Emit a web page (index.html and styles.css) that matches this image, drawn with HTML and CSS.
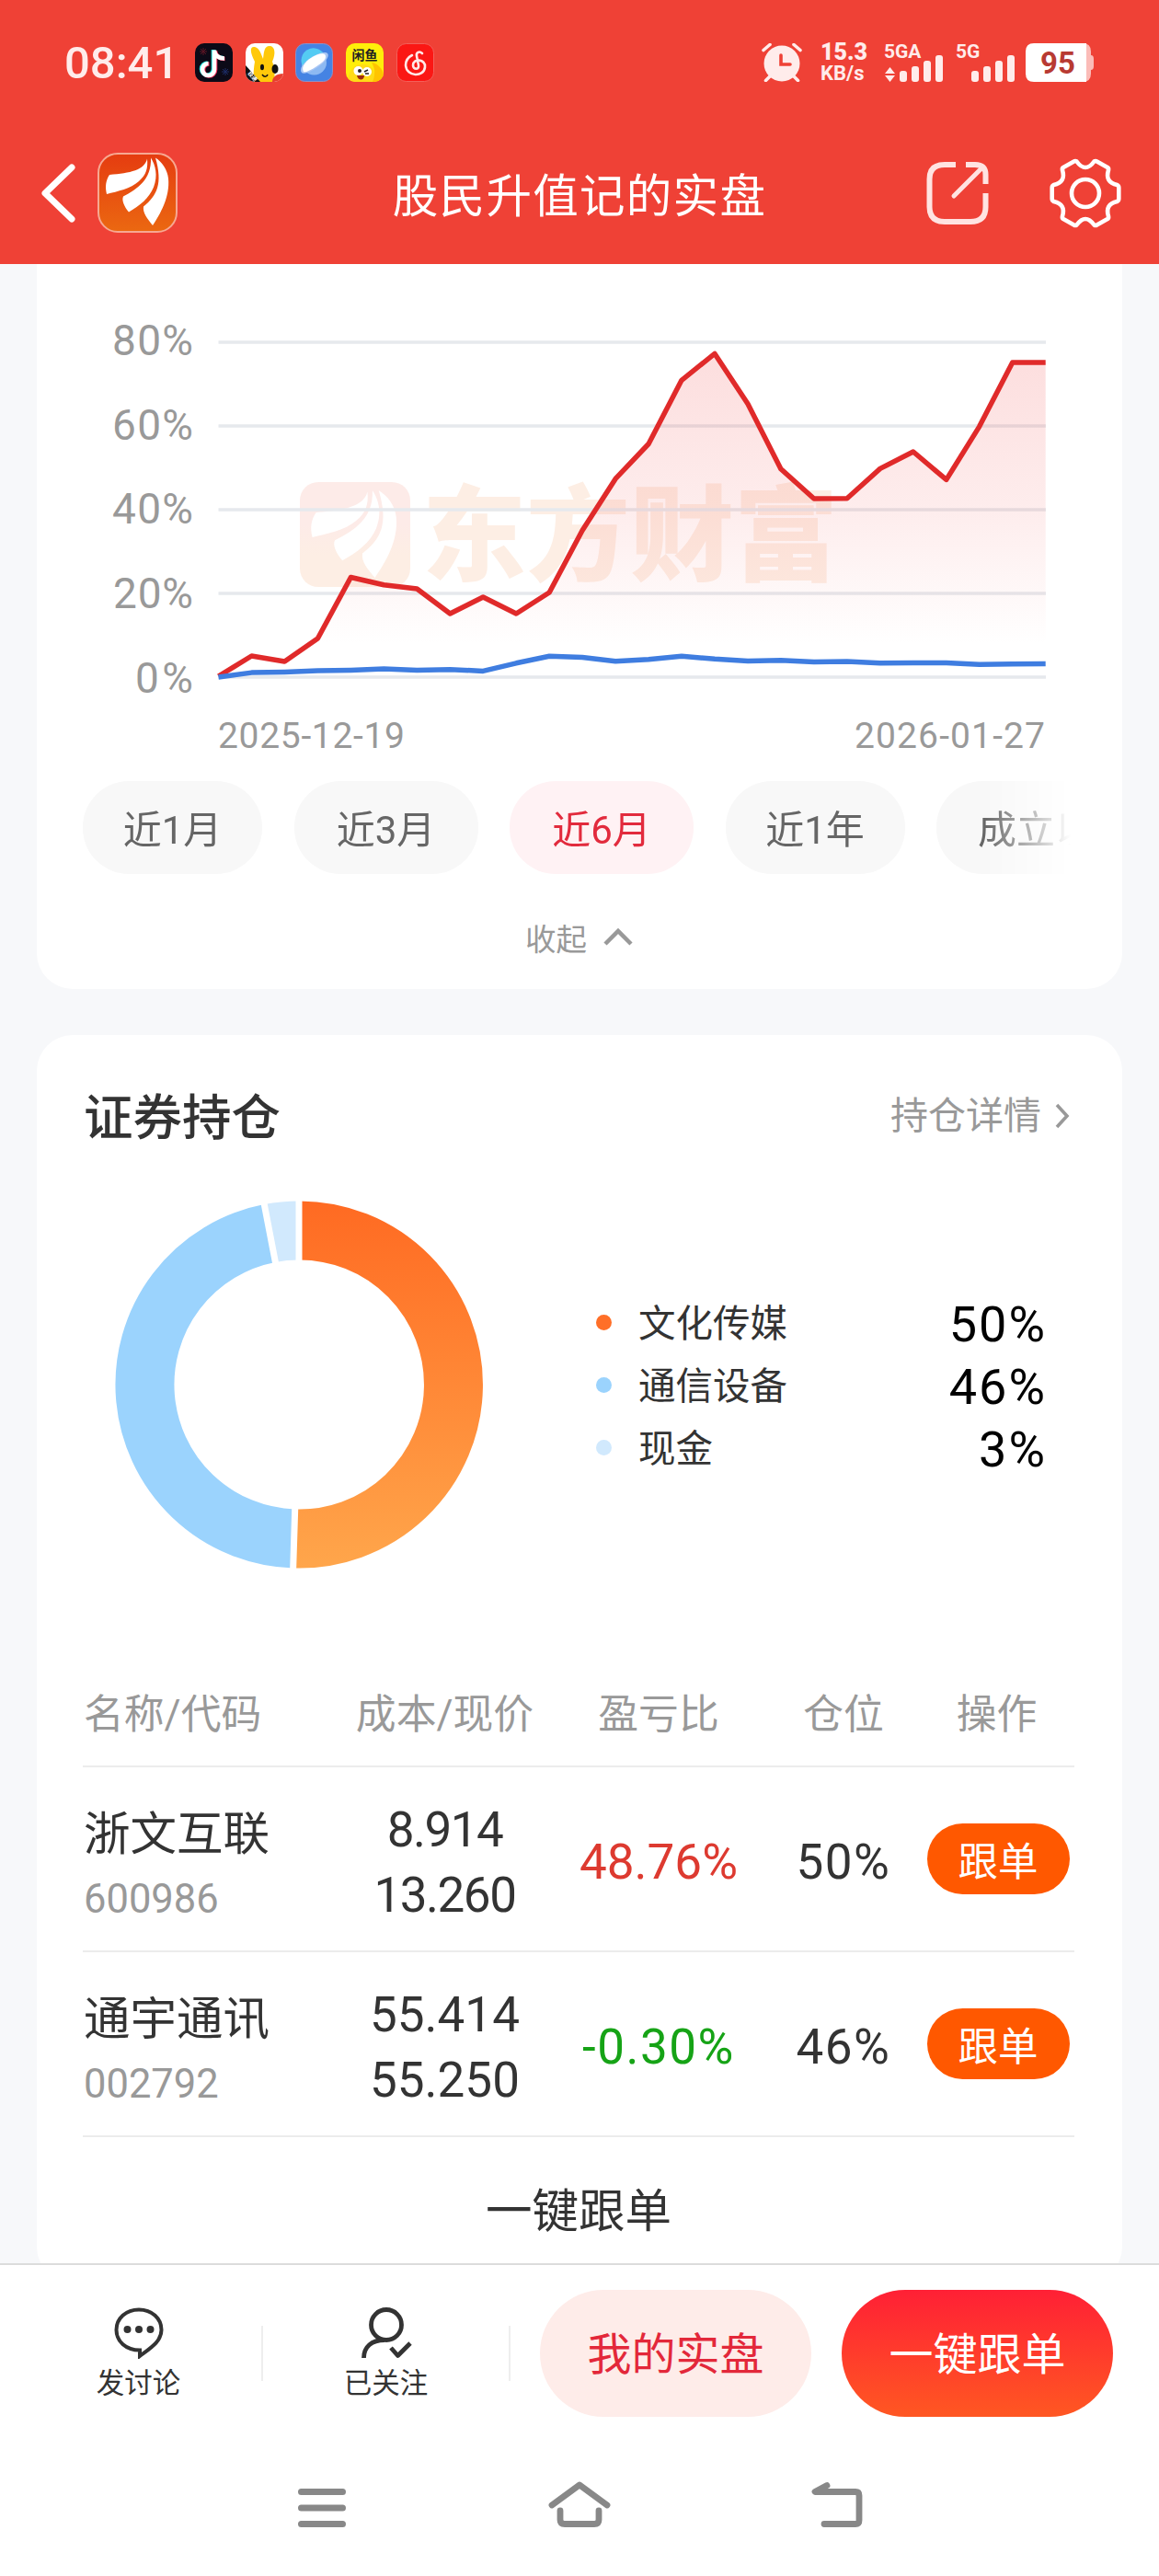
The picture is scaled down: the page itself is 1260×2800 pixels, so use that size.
FILE: index.html
```html
<!DOCTYPE html>
<html lang="zh-CN">
<head>
    <meta charset="UTF-8">
    <meta name="viewport" content="width=device-width, initial-scale=1.0">
    <title>股民升值记的实盘</title>
    <link rel="stylesheet" href="styles.css">
</head>

<body>
    <header class="header">
        <div class="status">
            <span class="time">08:41</span>
            <div class="apps">
                <svg width="41" height="42" viewBox="0 0 41 42">
                    <rect width="41" height="42" rx="10" fill="#0c0a17"/>
                    <path d="M6 6l6 6M12 6l-6 6M9 5v8M5 9h8" stroke="#5a1524"/>
                    <path d="M30 28l6 6M36 28l-6 6M33 27v8M29 31h8" stroke="#1c2c66"/>
                    <g fill="none" stroke-width="4.6">
                        <path d="M20 7v21a6.5 6.5 0 1 1-6.500-6.500M20 8c1 5 5 8 10.500 8" stroke="#27e4e0"/>
                        <path d="M22 8v21a6.500 6.500 0 1 1-6.500-6.500M22 9c1 5 5 8 10.500 8" stroke="#f3305a"/>
                        <path d="M21 7.500v21a6.500 6.500 0 1 1-6.500-6.500M21 8.500c1 5 5 8 11 8" stroke="#fff"/>
                    </g>
                </svg>
                <svg width="41" height="42" viewBox="0 0 41 42">
                    <clipPath id="app2"><rect width="41" height="42" rx="10"/></clipPath>
                    <g clip-path="url(#app2)">
                        <rect width="41" height="42" fill="#fff"/>
                        <path d="M9 42C8 34 9 26 10 20 4 8 5 3 10 4s7 8 9 13c1-7 1-14 7-14s7 8 3 17c3 7 3 15 2 22z" fill="#ffc90a"/>
                        <path d="M0 24l16 18H0z" fill="#111"/>
                        <path d="M29 42c0-5 4-9 12-9v9z" fill="#e8402f"/>
                        <ellipse cx="18" cy="26" rx="2" ry="3.200" fill="#111"/>
                        <ellipse cx="32" cy="28" rx="3.500" ry="5" fill="#111"/>
                        <path d="M18 34c2 3 5 3 6 0" fill="none" stroke="#111" stroke-width="1.500"/>
                    </g>
                    <text class="app-tiny" transform="translate(2 33) rotate(48)" fill="#fff">极速</text>
                </svg>
                <svg width="41" height="42" viewBox="0 0 41 42">
                    <rect x=".5" y=".5" width="40" height="41" rx="10" fill="#4583e3" stroke="#8f8fc4"/>
                    <circle cx="20.500" cy="21" r="13.500" fill="#8db9f2"/>
                    <path d="M8 25a13.500 13.500 0 0 1 23-14z" fill="#54cbf3"/>
                    <path d="M7 32c-3-4 1-10 8-15S32 8 35 11s-3 10-9 14-16 10-19 7z" fill="#a9c6f4"/>
                    <path d="M9 31c-3-5 2-11 8-15s13-6 15-4 1 6-3 9-17 12-20 10z" fill="#fff"/>
                </svg>
                <svg width="41" height="42" viewBox="0 0 41 42">
                    <clipPath id="app4"><rect width="41" height="42" rx="10"/></clipPath>
                    <g clip-path="url(#app4)">
                        <rect width="41" height="42" fill="#ffee0a"/>
                        <path d="M23 42c11-4 9-14 5-21 7 1 12 7 13 13v8z" fill="#ffc400"/>
                        <path d="M3 42c-2-8 4-20 16-19s14 10 10 19z" fill="#ffdb17"/>
                        <circle cx="13.500" cy="30" r="5" fill="#fff"/>
                        <circle cx="23" cy="31" r="5" fill="#fff"/>
                        <circle cx="15" cy="30" r="2" fill="#222"/>
                        <path d="M20 31l4-2M21 33h4" stroke="#222" stroke-width="1.500"/>
                        <path d="M12 35h8c0 6-7 6-8 0z" fill="#9c2a10"/>
                    </g>
                    <text class="app-name" x="20.500" y="18" text-anchor="middle" fill="#222">闲鱼</text>
                </svg>
                <svg width="41" height="42" viewBox="0 0 41 42">
                    <rect x=".5" y=".5" width="40" height="41" rx="10" fill="#fb1714" stroke="#f3605a"/>
                    <g fill="none" stroke="#ffe9e8" stroke-width="2.600" stroke-linecap="round">
                        <path d="M28 11c-3-3-7-1-6 3l2 10c1 5-6 5-6 0 0-8 14-7 13 2-1 11-20 11-21-2 0-6 3-9 7-11"/>
                    </g>
                </svg>
            </div>
            <div class="status-right">
                <svg class="alarm" width="44" height="42" viewBox="0 0 44 42">
                    <g fill="none" stroke="#ffeceb" stroke-width="3.600" stroke-linecap="round">
                        <path d="M2 7.500l7-6M42 7.500l-7-6M9 36l-4.500 4.500M35 36l4.500 4.500"/>
                    </g>
                    <circle cx="22" cy="22" r="19.500" fill="#ffeceb"/>
                    <path d="M21 13v10h10" fill="none" stroke="#ef4136" stroke-width="3.600" stroke-linecap="round"/>
                </svg>
                <div class="speed"><b>15.3</b><span>KB/s</span></div>
                <svg class="signal" width="65" height="54" viewBox="0 -5 65 54" fill="#ffeceb">
                    <text class="net" x="0" y="17">5GA</text>
                    <path d="M6.500 27l5.500 7H1zM6.500 43l5.500-7H1z"/>
                    <rect x="17" y="31" width="8" height="12" rx="3"/>
                    <rect x="30" y="26" width="8" height="17" rx="3"/>
                    <rect x="43" y="20" width="8" height="23" rx="3"/>
                    <rect x="56" y="14" width="8" height="29" rx="3"/>
                </svg>
                <svg class="signal2" width="65" height="54" viewBox="0 -5 65 54" fill="#ffeceb">
                    <text class="net" x="0" y="17">5G</text>
                    <rect x="17" y="31" width="8" height="12" rx="3"/>
                    <rect x="30" y="26" width="8" height="17" rx="3"/>
                    <rect x="43" y="20" width="8" height="23" rx="3"/>
                    <rect x="56" y="14" width="8" height="29" rx="3"/>
                </svg>
                <svg width="75" height="42" viewBox="0 0 75 42">
                    <path d="M58 0h4q9 0 9 9v4q3 0 3 4v8q0 4-3 4v4q0 9-9 9h-4z" fill="#fbbcb8"/>
                    <path d="M9 0h57v42H9q-9 0-9-9V9q0-9 9-9z" fill="#fff"/>
                    <text class="battery" x="35" y="33" text-anchor="middle">95</text>
                </svg>
            </div>
        </div>

        <div class="nav">
            <div class="nav-left">
                <svg width="44" height="66" viewBox="0 0 44 66">
                    <path d="M36 5L7 33l29 28" fill="none" stroke="#fff" stroke-width="7" stroke-linecap="round" stroke-linejoin="round"/>
                </svg>
                <svg class="logo" width="87" height="87" viewBox="0 0 87 87">
                    <defs>
                        <linearGradient id="logoBg" x1="0" y1="0" x2="0" y2="1">
                            <stop offset="0" stop-color="#e53c10"/>
                            <stop offset="1" stop-color="#eb6811"/>
                        </linearGradient>
                    </defs>
                    <rect x="1" y="1" width="85" height="85" rx="21" fill="url(#logoBg)" stroke="#f7a892" stroke-width="2"/>
                    <g id="petals" fill="#fff">
                        <path d="M54 6.500C51 19 36 22 13 24c-4 6-5 13-3 21 12-3 26-6 35-14 8-7 10-14 9-24.500z"/>
                        <path d="M58 5.500c1 24-15 34-30 42-2 4 1 11 6 17 12-7 22-15 27-27 5-13 2-24-3-32z"/>
                        <path d="M63 5.500c8 28 2 41-13 53-1 7 4 13 10 20.500C68 67 79 48 77 28c-1-10-7-18-14-22.500z"/>
                    </g>
                </svg>
            </div>
            <h1>股民升值记的实盘</h1>
            <div class="nav-right">
                <svg width="68" height="70" viewBox="0 0 68 70">
                    <g fill="none" stroke="#ffe3e1" stroke-width="6" stroke-linecap="butt" stroke-linejoin="round">
                        <path d="M32 4H20Q3.500 4 3.500 20v30Q3.500 66 20 66h28q16.500 0 16.500-16V35"/>
                        <path d="M43 4h10q11.500 0 11.500 11v10"/>
                        <path d="M61 7L30 38" stroke-linecap="round" stroke-width="5"/>
                    </g>
                </svg>
                <svg width="78" height="78" viewBox="-39 -39 78 78">
                    <path d="M12.500 -34.500Q11 -35.500 9.500 -34.500Q0 -21.500 -9.500 -34.500Q-11 -35.500 -12.500 -34.500L-24 -28Q-25.500 -27 -25 -25Q-21 -12 -34.500 -9Q-36.300 -8 -36.300 -6V6Q-36.300 8 -34.500 9Q-21 12 -25 25Q-25.500 27 -24 28L-12.500 34.500Q-11 35.500 -9.500 34.500Q0 21.500 9.500 34.500Q11 35.500 12.500 34.500L24 28Q25.500 27 25 25Q21 12 34.500 9Q36.300 8 36.300 6V-6Q36.300 -8 34.500 -9Q21 -12 25 -25Q25.500 -27 24 -28z" fill="none" stroke="#fff" stroke-width="4.600" stroke-linejoin="round"/>
                    <circle r="15" fill="none" stroke="#fff" stroke-width="4.600"/>
                </svg>
            </div>
        </div>
    </header>

    <main class="content">
        <section class="card card-chart">
            <svg class="chart" width="1180" height="562" viewBox="40 287 1180 562">
                <defs>
                    <linearGradient id="area" gradientUnits="userSpaceOnUse" x1="0" y1="384" x2="0" y2="736">
                        <stop offset="0" stop-color="#f03a3a" stop-opacity=".17"/>
                        <stop offset=".5" stop-color="#f03a3a" stop-opacity=".09"/>
                        <stop offset=".9" stop-color="#f03a3a" stop-opacity="0"/>
                    </linearGradient>
                    <linearGradient id="markBg" x1="0" y1="0" x2="0" y2="1">
                        <stop offset=".4" stop-color="#fdebe8"/>
                        <stop offset=".7" stop-color="#fdeee4"/>
                    </linearGradient>
                </defs>
                <rect x="326" y="524" width="120" height="114" rx="20" fill="url(#markBg)"/>
                <use href="#petals" transform="translate(326 526) scale(1.360 1.290)"/>
                <text class="watermark" x="459" y="622">东方财富</text>
                <path d="M237.500 372H1137M237.500 463H1137M237.500 554H1137M237.500 645H1137M237.500 736H1137" stroke="#e6e9ed" stroke-width="3.500"/>
                <polygon fill="url(#area)" points="237.500,735 273.500,713 309.400,719 345.400,694 381.400,627.500 417.300,635.700 453.300,640 489.300,667 525.200,649 561.200,667 597.200,644 633.100,576.500 669.100,520.400 705.100,482.500 741,413.300 777,384.400 813,439 848.900,509.700 884.900,542 920.900,541.700 956.800,509.400 992.800,491 1028.800,521.400 1064.700,463.600 1100.700,394 1136.700,394 1136.700,736 237.500,736"/>
                <polyline class="line line-red" points="237.500,735 273.500,713 309.400,719 345.400,694 381.400,627.500 417.300,635.700 453.300,640 489.300,667 525.200,649 561.200,667 597.200,644 633.100,576.500 669.100,520.400 705.100,482.500 741,413.300 777,384.400 813,439 848.900,509.700 884.900,542 920.900,541.700 956.800,509.400 992.800,491 1028.800,521.400 1064.700,463.600 1100.700,394 1136.700,394"/>
                <polyline class="line line-blue" points="237.500,736 273.500,731.100 309.400,730.400 345.400,729.100 381.400,728.400 417.300,727 453.300,728.400 489.300,727.700 525.200,729.400 561.200,720.800 597.200,713.200 633.100,714.600 669.100,718.700 705.100,716.700 741,713.200 777,716.300 813,718.400 848.900,717.700 884.900,719.400 920.900,719.100 956.800,720.800 992.800,720.500 1028.800,720.500 1064.700,722.200 1100.700,721.800 1136.700,721.500"/>
                <g class="y-label">
                    <text x="122" y="386" textLength="88">80%</text>
                    <text x="122" y="478" textLength="88">60%</text>
                    <text x="122" y="569" textLength="88">40%</text>
                    <text x="123" y="661" textLength="87">20%</text>
                    <text x="147" y="753" textLength="63">0%</text>
                </g>
                <g class="x-label">
                    <text x="237" y="813" textLength="203">2025-12-19</text>
                    <text x="929" y="813" textLength="207">2026-01-27</text>
                </g>
            </svg>
            <div class="chips">
                <span class="chip">近1月</span>
                <span class="chip chip-wide">近3月</span>
                <span class="chip chip-wide active">近6月</span>
                <span class="chip">近1年</span>
                <span class="chip chip-last">成立以来</span>
            </div>
            <div class="fold">
                收起
                <svg width="34" height="22" viewBox="0 0 34 22">
                    <path d="M3 18L17 4l14 14" fill="none" stroke="#999" stroke-width="4.500"/>
                </svg>
            </div>
        </section>

        <section class="card card-hold">
            <div class="hold-head">
                <h2>证券持仓</h2>
                <a class="more">持仓详情
                    <svg width="18" height="30" viewBox="0 0 18 30">
                        <path d="M3 3l11 12L3 27" fill="none" stroke="#999" stroke-width="3.600"/>
                    </svg>
                </a>
            </div>

            <div class="ratio">
                <svg width="400" height="400" viewBox="0 0 400 400">
                    <defs>
                        <linearGradient id="orange" gradientUnits="userSpaceOnUse" x1="0" y1="0" x2="0" y2="400">
                            <stop offset="0" stop-color="#ff6a22"/>
                            <stop offset="1" stop-color="#ffa64b"/>
                        </linearGradient>
                    </defs>
                    <g fill="none" stroke-width="64">
                        <path d="M200 32.500A167.500 167.500 0 1 1 194.700 367.400" stroke="url(#orange)"/>
                        <path d="M194.700 367.400A167.500 167.500 0 0 1 168.300 35.500" stroke="#9bd3fd"/>
                        <path d="M168.300 35.500A167.500 167.500 0 0 1 200 32.500" stroke="#d1e9fd"/>
                        <path d="M200 200V-2M200 200L193.600 402M200 200L161.500 0" stroke="#fff" stroke-width="7"/>
                    </g>
                </svg>
                <ul class="legend">
                    <li><i class="dot dot-orange"></i><span>文化传媒</span><em>50%</em></li>
                    <li><i class="dot dot-blue"></i><span>通信设备</span><em>46%</em></li>
                    <li><i class="dot dot-light"></i><span>现金</span><em>3%</em></li>
                </ul>
            </div>

            <div class="table">
                <div class="row row-head">
                    <span>名称/代码</span>
                    <span>成本/现价</span>
                    <span>盈亏比</span>
                    <span>仓位</span>
                    <span>操作</span>
                </div>
                <div class="row">
                    <div class="name"><b>浙文互联</b><small>600986</small></div>
                    <div class="price"><span class="tight">8.914</span><span class="tight">13.260</span></div>
                    <div class="num up">48.76%</div>
                    <div class="num wide">50%</div>
                    <div><button class="follow">跟单</button></div>
                </div>
                <div class="row">
                    <div class="name"><b>通宇通讯</b><small>002792</small></div>
                    <div class="price"><span>55.414</span><span>55.250</span></div>
                    <div class="num wide down">-0.30%</div>
                    <div class="num wide">46%</div>
                    <div><button class="follow">跟单</button></div>
                </div>
            </div>
            <div class="follow-all">一键跟单</div>
        </section>
    </main>

    <footer class="footer">
        <div class="toolbar">
            <div class="tool">
                <svg width="54" height="56" viewBox="0 0 54 56">
                    <path d="M27 2.500C41 2.500 51.500 12 51.500 24.500 51.500 37 40 44 28 53v-6.500C13 46.500 2.500 37 2.500 24.500S13 2.500 27 2.500z" fill="none" stroke="#333" stroke-width="4"/>
                    <g fill="#333"><circle cx="14.500" cy="24" r="4"/><circle cx="27" cy="24" r="4"/><circle cx="39.500" cy="24" r="4"/></g>
                </svg>
                <span>发讨论</span>
            </div>
            <i class="sep"></i>
            <div class="tool">
                <svg width="56" height="56" viewBox="0 0 56 56">
                    <g fill="none" stroke="#333" stroke-width="4.800">
                        <ellipse cx="28" cy="19" rx="16.500" ry="16.500"/>
                        <path d="M26 35.500C12 35.500 3.500 43 3.500 55M33 44l7.500 8.500L54 39" stroke-linejoin="round"/>
                    </g>
                </svg>
                <span>已关注</span>
            </div>
            <i class="sep"></i>
            <button class="btn btn-mine">我的实盘</button>
            <button class="btn btn-all">一键跟单</button>
        </div>
        <div class="sys-nav">
            <svg width="70" height="60" viewBox="0 0 70 60">
                <path d="M12.500 12.500h45M12.500 30h45M12.500 47.500h45" stroke="#888" stroke-width="7" stroke-linecap="round"/>
            </svg>
            <svg width="70" height="60" viewBox="0 0 70 60">
                <path d="M5 27L35 5l30 22M14 33v10q0 4.500 5 4.500h32q5 0 5-4.500V33" fill="none" stroke="#888" stroke-width="6.800" stroke-linecap="round" stroke-linejoin="round"/>
            </svg>
            <svg width="70" height="60" viewBox="0 0 70 60">
                <path d="M24 5.500L11 12.500h44q4 0 4 4v27q0 4-4 4H21" fill="none" stroke="#888" stroke-width="6.800" stroke-linecap="round" stroke-linejoin="round"/>
            </svg>
        </div>
    </footer>
</body>
</html>
```
FILE: styles.css
```css
* {
    box-sizing: border-box;
    margin: 0;
    padding: 0;
}

body {
    width: 1260px;
    height: 2800px;
    overflow: hidden;
    display: flex;
    flex-direction: column;
    background-color: #f7f8fa;
    color: #333;
    font-family: Roboto, "Noto Sans CJK SC", sans-serif;
}

svg {
    display: block;
    flex: none;
}

button {
    border: none;
    font-family: inherit;
}

/* header */
.header {
    height: 287px;
    flex: none;
    background-color: #ef4136;
    color: #fff;
}

.status {
    height: 136px;
    padding: 0 70px;
    display: flex;
    align-items: center;
}

.time {
    width: 142px;
    font-size: 49px;
    font-weight: 500;
    line-height: 60px;
    padding-top: 2px;
    color: #ffeceb;
}

.apps {
    display: flex;
    gap: 13.7px;
}

.app-tiny {
    font-size: 6px;
    font-weight: 700;
}

.app-name {
    font-size: 14px;
    font-weight: 700;
}

.status-right {
    margin-left: auto;
    display: flex;
    align-items: center;
}

.alarm {
    margin-right: 20px;
}

.speed {
    width: 69px;
    display: flex;
    flex-direction: column;
    font-size: 22px;
    font-weight: 700;
    line-height: 22px;
    color: #ffeceb;
}

.speed b {
    font-size: 25px;
    line-height: 24px;
}

.net {
    font-size: 21px;
    font-weight: 700;
}

.signal {
    margin-right: 13px;
}

.signal2 {
    margin-right: 11px;
}

.battery {
    font-size: 33px;
    font-weight: 700;
    fill: #b83a32;
}

.nav {
    height: 151px;
    padding: 0 41px 0 42px;
    display: grid;
    grid-template-columns: 299px 1fr 300px;
    align-items: center;
}

.nav-left {
    display: flex;
    align-items: center;
    gap: 20px;
    padding-bottom: 4px;
}

.nav h1 {
    font-size: 49.5px;
    font-weight: 400;
    letter-spacing: 1.3px;
    line-height: 60px;
    padding-top: 5px;
    text-align: center;
    white-space: nowrap;
}

.nav-right {
    display: flex;
    align-items: center;
    justify-content: flex-end;
    gap: 66px;
    padding-bottom: 3px;
}

/* cards */
.content {
    height: 2173px;
    flex: none;
    overflow: hidden;
    padding: 0 40px;
}

.card {
    background-color: #fff;
    border-radius: 39px;
    overflow: hidden;
}

.card-chart {
    height: 788px;
    margin-bottom: 50px;
    border-radius: 0 0 39px 39px;
}

.watermark {
    font-size: 113px;
    font-weight: 900;
    fill: #fdeee4;
}

.line {
    fill: none;
    stroke-width: 5.5;
    stroke-linejoin: round;
}

.line-red {
    stroke: #e02a2a;
}

.line-blue {
    stroke: #3f7de0;
}

.y-label {
    font-size: 46px;
    fill: #999;
}

.x-label {
    font-size: 39px;
    fill: #999;
}

.chips {
    height: 101px;
    margin: 0 52px 0 50px;
    display: flex;
    gap: 34.5px;
    overflow: hidden;
    mask-image: linear-gradient(to right, #000 979px, transparent 1074px);
}

.chip {
    width: 195px;
    flex: none;
    border-radius: 50px;
    background-color: #f8f8f8;
    color: #666;
    font-size: 42px;
    line-height: 107px;
    text-align: center;
    white-space: nowrap;
}

.chip-wide {
    width: 200px;
}

.chip-last {
    width: 258px;
}

.chip.active {
    background-color: #fff2f4;
    color: #e22b3d;
}

.fold {
    height: 125px;
    display: flex;
    align-items: center;
    justify-content: center;
    gap: 17px;
    padding-top: 12px;
    font-size: 33.5px;
    color: #999;
}

/* holdings */
.card-hold {
    height: 1356px;
    padding: 0 52px 0 50px;
}

.hold-head {
    height: 180px;
    display: flex;
    align-items: center;
    justify-content: space-between;
}

.hold-head h2 {
    font-size: 53.5px;
    font-weight: 500;
    line-height: 60px;
    padding: 2px 0 0 1px;
}

.more {
    display: flex;
    align-items: center;
    gap: 14px;
    font-size: 41px;
    line-height: 50px;
    color: #999;
    padding-right: 4px;
    margin-top: -4px;
}

.ratio {
    display: flex;
    align-items: center;
    padding-left: 35px;
    height: 400px;
}

.legend {
    list-style: none;
    margin-left: 123px;
    width: 488px;
}

.legend li {
    height: 68px;
    display: flex;
    align-items: center;
    font-size: 40.5px;
    line-height: 68px;
}

.legend span {
    padding-top: 3px;
}

.dot {
    width: 17px;
    height: 17px;
    margin-right: 29px;
    border-radius: 50%;
}

.dot-orange {
    background-color: #ff6f28;
}

.dot-blue {
    background-color: #9bd3fd;
}

.dot-light {
    background-color: #d1e9fd;
}

.legend em {
    margin-left: auto;
    margin-right: -2px;
    padding-top: 5px;
    font-size: 54px;
    font-style: normal;
    letter-spacing: 2px;
    color: #000;
}

.table {
    margin-top: 98px;
}

.row {
    display: grid;
    grid-template-columns: 280px 227px 238px 164px 169px;
    align-items: center;
    height: 201px;
    border-bottom: 2px solid #ececec;
    text-align: center;
}

.row-head {
    height: 118px;
    font-size: 43.8px;
    color: #999;
    padding-bottom: 3px;
}

.row>:first-child {
    text-align: left;
    padding-left: 1px;
}

.name {
    display: flex;
    flex-direction: column;
    gap: 4px;
    padding-top: 13px;
}

.name b {
    font-size: 50.5px;
    font-weight: 400;
    line-height: 71px;
}

.name small {
    font-size: 43.5px;
    line-height: 64px;
    color: #999;
}

.price {
    display: flex;
    flex-direction: column;
    font-size: 53px;
    line-height: 71px;
    padding-top: 9px;
}

.tight {
    letter-spacing: -1.5px;
}

.num {
    font-size: 53px;
    line-height: 60px;
    padding-top: 7px;
}

.wide {
    letter-spacing: 1.5px;
}

.up {
    color: #dd3a30;
}

.down {
    color: #16a316;
}

.follow {
    width: 155px;
    height: 77px;
    margin-left: 3px;
    border-radius: 39px;
    background-color: #ff5800;
    color: #fff;
    font-size: 43.5px;
    line-height: 77px;
    padding-top: 4px;
}

.follow-all {
    font-size: 50.5px;
    line-height: 60px;
    padding-top: 51px;
    text-align: center;
}

/* bottom */
.footer {
    flex: 1;
    background-color: #fff;
    border-top: 2px solid #dcdcdc;
}

.toolbar {
    height: 192px;
    display: flex;
    align-items: center;
    padding-left: 17px;
}

.tool {
    width: 267px;
    display: flex;
    flex-direction: column;
    align-items: center;
    font-size: 30.5px;
    line-height: 36px;
    gap: 9px;
}

.sep {
    width: 2px;
    height: 60px;
    background-color: #eee;
}

.btn {
    width: 295px;
    height: 138px;
    border-radius: 69px;
    font-size: 48px;
    line-height: 138px;
    padding-top: 2px;
}

.btn-mine {
    margin: 0 33px 0 32px;
    background-color: #feece9;
    color: #e3283a;
}

.btn-all {
    background-image: linear-gradient(#ff2035, #ff5722);
    color: #fff;
}

.sys-nav {
    display: flex;
    justify-content: center;
    gap: 210px;
    padding-top: 42px;
}
```
